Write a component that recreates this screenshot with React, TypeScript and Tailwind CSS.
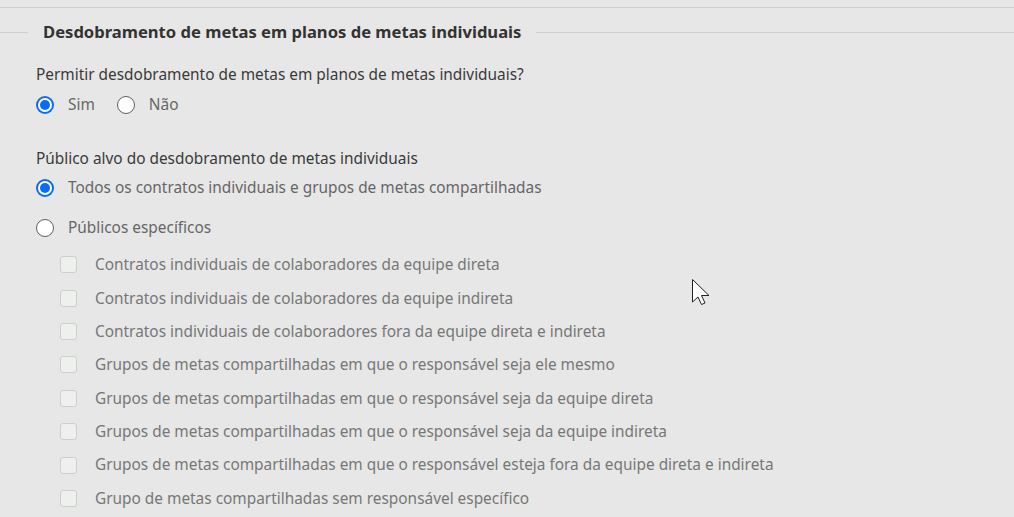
import React from 'react';

const checks = [
  'Contratos individuais de colaboradores da equipe direta',
  'Contratos individuais de colaboradores da equipe indireta',
  'Contratos individuais de colaboradores fora da equipe direta e indireta',
  'Grupos de metas compartilhadas em que o responsável seja ele mesmo',
  'Grupos de metas compartilhadas em que o responsável seja da equipe direta',
  'Grupos de metas compartilhadas em que o responsável seja da equipe indireta',
  'Grupos de metas compartilhadas em que o responsável esteja fora da equipe direta e indireta',
  'Grupo de metas compartilhadas sem responsável específico',
];

const Radio = ({ checked }: { checked?: boolean }) =>
  checked ? (
    <span className="w-[18px] h-[18px] rounded-full bg-[#0a6cf5] flex items-center justify-center shrink-0">
      <span className="w-[14px] h-[14px] rounded-full bg-white flex items-center justify-center">
        <span className="w-[10px] h-[10px] rounded-full bg-[#0a6cf5]" />
      </span>
    </span>
  ) : (
    <span className="block w-[18px] h-[18px] rounded-full border-[1.5px] border-[#5f5f5f] bg-white shrink-0" />
  );

const App = () => {
  return (
    <div
      className="relative w-[1014px] h-[517px] overflow-hidden bg-[#e6e7e6] text-[15.4px]"
      style={{ fontFamily: '"Segoe UI", "Noto Sans", sans-serif' }}
    >
      <div className="h-[7px]" />
      <div className="h-px bg-[#cfd0cf]" />

      {/* legend */}
      <div className="flex items-center h-[49px]">
        <div className="w-[28px] h-px bg-[#cfd0cf]" />
        <div className="px-[15px] font-bold text-[#333] text-[16.6px]">
          Desdobramento de metas em planos de metas individuais
        </div>
        <div className="flex-1 h-px bg-[#cfd0cf]" />
      </div>

      <div className="pl-[36px]">
        <div className="text-[#3a3a3a] leading-[22px] mt-[7px]">
          Permitir desdobramento de metas em planos de metas individuais?
        </div>
        <div className="flex items-center h-[30px] mt-[4px] text-[#666]">
          <Radio checked />
          <span className="ml-[14px]">Sim</span>
          <span className="ml-[22px] flex"><Radio /></span>
          <span className="ml-[14px]">Não</span>
        </div>

        <div className="text-[#3a3a3a] leading-[22px] mt-[28px]">
          Público alvo do desdobramento de metas individuais
        </div>
        <div className="flex items-center h-[30px] mt-[3px] text-[#666]">
          <Radio checked />
          <span className="ml-[14px]">Todos os contratos individuais e grupos de metas compartilhadas</span>
        </div>
        <div className="flex items-center h-[30px] mt-[10px] text-[#666]">
          <Radio />
          <span className="ml-[14px]">Públicos específicos</span>
        </div>

        <div className="pl-[24px] mt-[5px] flex flex-col">
          {checks.map((c) => (
            <div key={c} className="flex items-center h-[33.4px] text-[#777]">
              <span className="w-[17px] h-[17px] rounded-[3px] border border-[#cdcecd] bg-[#eef0ee] shrink-0" />
              <span className="ml-[18px]">{c}</span>
            </div>
          ))}
        </div>
      </div>

      {/* mouse cursor */}
      <svg className="absolute left-[692px] top-[279px]" width="18" height="26" viewBox="0 0 18 26">
        <path d="M0.5 0.5 L0.5 23 L6 18 L9.5 25.5 L13 24 L9.5 16.5 L17 16.5 Z" fill="#fff" stroke="#222" strokeWidth="1" strokeLinejoin="miter" />
      </svg>
    </div>
  );
};

export default App;
